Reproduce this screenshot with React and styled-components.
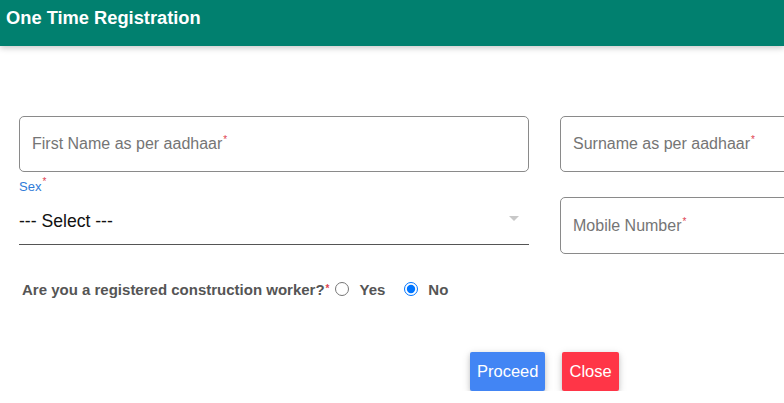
import React, { useState } from 'react';
import styled, { createGlobalStyle } from 'styled-components';

const GlobalStyle = createGlobalStyle`
  html, body {
    margin: 0;
    padding: 0;
    background: #fff;
    overflow: hidden;
    font-family: "Liberation Sans", Arial, sans-serif;
  }
`;

const Header = styled.header`
  height: 46px;
  background: #01806f;
  box-shadow: 0 2px 6px rgba(0, 0, 0, 0.22);
  display: flex;
  align-items: flex-start;
  padding: 7px 6px 0;
  box-sizing: border-box;
`;

const Title = styled.h1`
  margin: 0;
  color: #fff;
  font-size: 18.3px;
  font-weight: 700;
  line-height: 21px;
`;

const Form = styled.form`
  padding: 70px 0 0 19px;
  width: 1100px;
`;

const Columns = styled.div`
  display: flex;
  gap: 31px;
  align-items: flex-start;
`;

const Column = styled.div`
  width: 510px;
  display: flex;
  flex-direction: column;
`;

const Field = styled.div`
  height: ${({ $h }) => $h || 56}px;
  margin-top: ${({ $mt }) => $mt || 0}px;
  border: 1px solid #8a8a8a;
  border-radius: 5px;
  box-sizing: border-box;
  display: flex;
  align-items: center;
  padding-left: 12px;
`;

const Placeholder = styled.span`
  color: #757575;
  font-size: 16px;
`;

const Req = styled.sup`
  color: #e0434f;
  font-size: 10px;
  margin-left: 1px;
  vertical-align: 6px;
  line-height: 0;
`;

const SelectLabel = styled.label`
  margin-top: 7px;
  font-size: 13px;
  line-height: 15px;
  color: #2f7bd8;
`;

const Select = styled.div`
  height: 51px;
  padding-top: 4px;
  box-sizing: border-box;
  border-bottom: 1px solid #555;
  display: flex;
  align-items: center;
  justify-content: space-between;
  font-size: 17.6px;
  color: #111;
  padding-right: 10px;
`;

const Caret = styled.span`
  width: 0;
  height: 0;
  border-left: 5px solid transparent;
  border-right: 5px solid transparent;
  border-top: 5px solid #c8c8c8;
  margin-top: -6px;
`;

const RadioRow = styled.div`
  margin-top: 34px;
  padding-left: 3px;
  display: flex;
  align-items: center;
  height: 20px;
  font-size: 15px;
  font-weight: 700;
  color: #555;
`;

const Option = styled.label`
  display: flex;
  align-items: center;
  margin-left: ${({ $ml }) => $ml}px;
  gap: 10px;
`;

const Radio = styled.input`
  margin: 0;
  width: 14px;
  height: 14px;
  accent-color: #0075ff;
`;

const Buttons = styled.div`
  display: flex;
  gap: 17px;
  margin: 53px 0 0 451px;
`;

const Button = styled.button`
  height: 39px;
  padding: 0 ${({ $px }) => $px}px;
  border: none;
  border-radius: 2px;
  font-family: inherit;
  font-size: 16.5px;
  color: #fff;
  background: ${({ $bg }) => $bg};
  box-shadow: 0 2px 5px rgba(0, 0, 0, 0.16), 0 2px 10px rgba(0, 0, 0, 0.12);
  cursor: pointer;
`;

const App = () => {
  const [worker, setWorker] = useState('no');

  return (
    <>
      <GlobalStyle />
      <Header>
        <Title>One Time Registration</Title>
      </Header>
      <Form onSubmit={(e) => e.preventDefault()}>
        <Columns>
          <Column>
            <Field>
              <Placeholder>
                First Name as per aadhaar<Req>*</Req>
              </Placeholder>
            </Field>
            <SelectLabel>
              Sex<Req>*</Req>
            </SelectLabel>
            <Select>
              <span>--- Select ---</span>
              <Caret />
            </Select>
            <RadioRow>
              Are you a registered construction worker?<Req>*</Req>
              <Option $ml={6}>
                <Radio
                  type="radio"
                  name="worker"
                  checked={worker === 'yes'}
                  onChange={() => setWorker('yes')}
                />
                Yes
              </Option>
              <Option $ml={19}>
                <Radio
                  type="radio"
                  name="worker"
                  checked={worker === 'no'}
                  onChange={() => setWorker('no')}
                />
                No
              </Option>
            </RadioRow>
          </Column>
          <Column>
            <Field>
              <Placeholder>
                Surname as per aadhaar<Req>*</Req>
              </Placeholder>
            </Field>
            <Field $mt={25} $h={57}>
              <Placeholder>
                Mobile Number<Req>*</Req>
              </Placeholder>
            </Field>
          </Column>
        </Columns>
        <Buttons>
          <Button type="submit" $bg="#4285f4" $px={7}>
            Proceed
          </Button>
          <Button type="button" $bg="#ff3547" $px={7}>
            Close
          </Button>
        </Buttons>
      </Form>
    </>
  );
};

export default App;
